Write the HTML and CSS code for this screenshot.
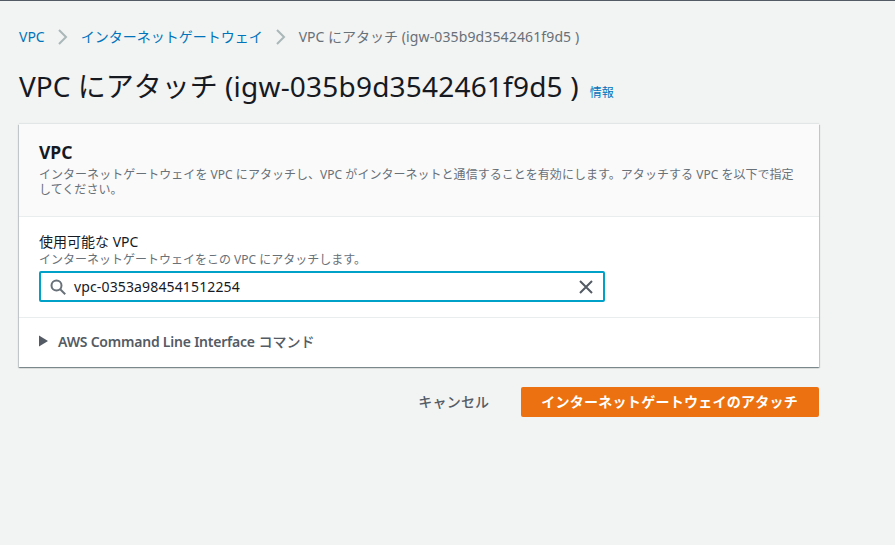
FILE: index.html
```html
<!DOCTYPE html>
<html lang="ja">
<head>
<meta charset="utf-8">
<title>VPC にアタッチ</title>
<link rel="stylesheet" href="styles.css">
</head>
<body>
<div class="page">
  <nav class="crumbs">
    <a class="link">VPC</a>
    <svg class="sep" width="12" height="16" viewBox="0 0 12 16"><path d="M2 1l7 7-7 7" fill="none" stroke="#aab7b8" stroke-width="2"/></svg>
    <a class="link">インターネットゲートウェイ</a>
    <svg class="sep" width="12" height="16" viewBox="0 0 12 16"><path d="M2 1l7 7-7 7" fill="none" stroke="#aab7b8" stroke-width="2"/></svg>
    <span class="current">VPC にアタッチ <span class="igw-small">(igw-035b9d3542461f9d5 )</span></span>
  </nav>
  <div class="heading">
    <h1>VPC にアタッチ <span class="igw-large">(igw-035b9d3542461f9d5 )</span></h1>
    <a class="info">情報</a>
  </div>
  <section class="card">
    <header class="card-head">
      <h2>VPC</h2>
      <p>インターネットゲートウェイを VPC にアタッチし、VPC がインターネットと通信することを有効にします。アタッチする VPC を以下で指定してください。</p>
    </header>
    <div class="card-body">
      <div class="label">使用可能な VPC</div>
      <div class="hint">インターネットゲートウェイをこの VPC にアタッチします。</div>
      <div class="search">
        <svg class="icon" width="16" height="16" viewBox="0 0 16 16"><circle cx="6.5" cy="6.5" r="5" fill="none" stroke="#687078" stroke-width="2"/><path d="M10.2 10.2l5 5" stroke="#687078" stroke-width="2"/></svg>
        <span class="value">vpc-0353a984541512254</span>
        <svg class="icon" width="16" height="16" viewBox="0 0 16 16"><path d="M2 2l12 12M14 2L2 14" stroke="#545b64" stroke-width="2"/></svg>
      </div>
    </div>
    <div class="cli">
      <svg width="9" height="12" viewBox="0 0 9 12"><path d="M0 0.5l9 5.5-9 5.5z" fill="#545b64"/></svg>
      <span><span class="cli-latin">AWS Command Line Interface</span> <span class="cli-cjk">コマンド</span></span>
    </div>
  </section>
  <div class="actions">
    <button class="cancel">キャンセル</button>
    <button class="primary">インターネットゲートウェイのアタッチ</button>
  </div>
</div>
</body>
</html>
```

FILE: styles.css
```css
html, body {
  margin: 0;
  height: 100%;
  background: #f2f3f3;
}
body {
  border-top: 1px solid #545b64;
  box-sizing: border-box;
  font-family: "Noto Sans", "Noto Sans CJK JP", sans-serif;
  color: #16191f;
  overflow: hidden;
}
.page {
  width: 800px;
  padding: 26px 0 0 19px;
}
.crumbs {
  display: flex;
  align-items: center;
  gap: 12px;
  font-size: 14px;
  line-height: 20px;
  white-space: nowrap;
}
.link { color: #0073bb; }
.current { color: #687078; }
.igw-small { letter-spacing: .13px; }
.igw-large { letter-spacing: .2px; }
.sep { flex: none; }
.heading {
  display: flex;
  align-items: baseline;
  gap: 11px;
  margin-top: 19px;
  white-space: nowrap;
}
h1 {
  margin: 0;
  font-size: 28px;
  line-height: 40px;
  font-weight: 400;
}
.info {
  font-size: 12px;
  color: #0073bb;
}
.card {
  margin-top: 18px;
  background: #fff;
  box-shadow: 0 1px 1px 0 rgba(0, 28, 36, .3), 1px 1px 1px 0 rgba(0, 28, 36, .15), -1px 1px 1px 0 rgba(0, 28, 36, .15), 0 -1px 1px 0 rgba(0, 28, 36, .06);
}
.card-head {
  background: #fafafa;
  border-bottom: 1px solid #eaeded;
  padding: 16px 20px 18px;
  height: 58px;
}
h2 {
  margin: 0 0 3px;
  font-size: 17.5px;
  line-height: 24px;
  font-weight: 700;
}
.card-head p {
  margin: 0;
  font-size: 12px;
  line-height: 15px;
  letter-spacing: .03px;
  color: #687078;
}
.card-body {
  padding: 15px 20px 15px;
  border-bottom: 1px solid #eaeded;
}
.label {
  font-size: 14px;
  line-height: 20px;
  margin-bottom: 1px;
  color: #16191f;
}
.hint {
  font-size: 12px;
  line-height: 14px;
  color: #687078;
}
.search {
  margin-top: 4px;
  box-sizing: border-box;
  width: 566px;
  height: 31px;
  border: 2px solid #00a1c9;
  border-radius: 2px;
  background: #fff;
  display: flex;
  align-items: center;
  padding: 0 9px;
  gap: 8px;
}
.value {
  flex: 1;
  font-size: 14px;
  letter-spacing: .14px;
}
.icon { flex: none; }
.cli {
  display: flex;
  align-items: center;
  gap: 10px;
  height: 45px;
  padding: 0 20px 4px;
  font-size: 14px;
  font-weight: 600;
  color: #545b64;
}
.cli-latin { letter-spacing: -.22px; }
.cli-cjk { font-weight: 500; }
.actions {
  display: flex;
  justify-content: flex-end;
  align-items: center;
  gap: 12px;
  margin-top: 20px;
}
button {
  font-family: inherit;
  font-size: 14px;
  border: 0;
  border-radius: 2px;
  height: 30px;
  padding: 0 20px 2px;
}
.cancel {
  background: none;
  color: #545b64;
  font-weight: 500;
  letter-spacing: .2px;
}
.primary {
  background: #ec7211;
  color: #fff;
  font-weight: 700;
  letter-spacing: .26px;
  padding-right: 21px;
}
```
